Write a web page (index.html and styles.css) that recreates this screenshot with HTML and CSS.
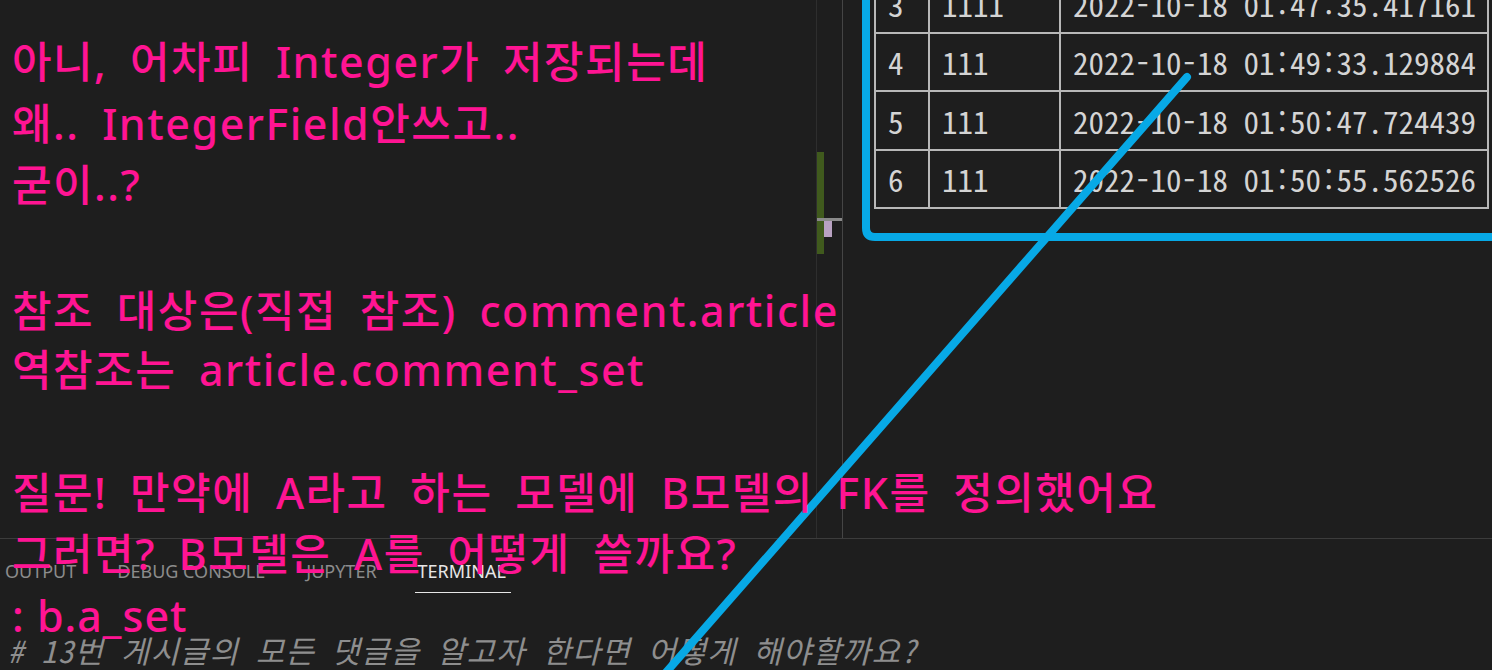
FILE: index.html
```html
<!DOCTYPE html>
<html lang="ko">
<head>
<meta charset="utf-8">
<title>Django 역참조</title>
<link rel="stylesheet" href="styles.css">
</head>
<body>
<div class="workbench">
  <div class="editors">
    <div class="editor-left"></div>
    <div class="ruler">
      <div class="ruler-green"></div>
      <div class="ruler-tick"></div>
      <div class="ruler-mark"></div>
    </div>
    <div class="editor-right">
      <div class="table-scroll">
        <table class="sqltable">
          <tr><td class="c1">3</td><td class="c2">1111</td><td class="c3">2022-10-18 01:47:35.417161</td></tr>
          <tr><td class="c1">4</td><td class="c2">111</td><td class="c3">2022-10-18 01:49:33.129884</td></tr>
          <tr><td class="c1">5</td><td class="c2">111</td><td class="c3">2022-10-18 01:50:47.724439</td></tr>
          <tr><td class="c1">6</td><td class="c2">111</td><td class="c3">2022-10-18 01:50:55.562526</td></tr>
        </table>
      </div>
    </div>
  </div>
  <div class="panel">
    <div class="panel-tabs">
      <div class="tab">OUTPUT</div>
      <div class="tab">DEBUG CONSOLE</div>
      <div class="tab">JUPYTER</div>
      <div class="tab active">TERMINAL</div>
    </div>
    <div class="terminal">
      <div class="term-line"># 13번 게시글의 모든 댓글을 알고자 한다면 어떻게 해야할까요?</div>
    </div>
  </div>
</div>

<svg class="annotation" width="1492" height="670" viewBox="0 0 1492 670" xmlns="http://www.w3.org/2000/svg">
  <path d="M866 -10 V228 Q866 237 875 237 H1500" fill="none" stroke="#07a9e6" stroke-width="8" stroke-linejoin="round"/>
  <path d="M1187 77 L662 677" fill="none" stroke="#07a9e6" stroke-width="8" stroke-linecap="round"/>
</svg>

<div class="notes">
  <div class="note">아니, 어차피 Integer가 저장되는데</div>
  <div class="note">왜.. IntegerField안쓰고..</div>
  <div class="note">굳이..?</div>
  <div class="note blank"></div>
  <div class="note shifted">참조 대상은(직접 참조) comment.article</div>
  <div class="note">역참조는 article.comment_set</div>
  <div class="note blank"></div>
  <div class="note">질문! 만약에 A라고 하는 모델에 B모델의 FK를 정의했어요</div>
  <div class="note">그러면? B모델은 A를 어떻게 쓸까요?</div>
  <div class="note tight">: b.a_set</div>
</div>
</body>
</html>
```

FILE: styles.css
```css
html, body {
  margin: 0;
  padding: 0;
  background: #1e1e1e;
}
body {
  width: 1492px;
  height: 670px;
  overflow: hidden;
  position: relative;
  font-family: "Noto Sans", "Noto Sans CJK KR", sans-serif;
}
.workbench {
  display: flex;
  flex-direction: column;
  height: 670px;
}
.editors {
  display: flex;
  height: 538px;
  flex: none;
}
.editor-left {
  width: 816px;
  flex: none;
}
.ruler {
  width: 25px;
  flex: none;
  position: relative;
  border-left: 1px solid #2e2e2e;
  border-right: 1px solid #454545;
}
.ruler-green {
  position: absolute;
  left: 0;
  top: 152px;
  width: 7px;
  height: 102px;
  background: #405a1d;
}
.ruler-tick {
  position: absolute;
  left: 0;
  top: 218px;
  width: 25px;
  height: 3px;
  background: #8a8a8a;
}
.ruler-mark {
  position: absolute;
  left: 7px;
  top: 221px;
  width: 8px;
  height: 16px;
  background: #b9a2c2;
}
.editor-right {
  flex: 1;
  overflow: hidden;
  padding-left: 31px;
}
.table-scroll {
  margin-top: -27px;
}
.sqltable {
  border-collapse: collapse;
  font-family: "Noto Sans Mono CJK KR", "DejaVu Sans Mono", monospace;
  font-size: 31px;
  color: #d4d4d4;
}
.sqltable td {
  border: 2px solid #b8b8b8;
  height: 56.5px;
  padding: 0 0 0 12px;
  vertical-align: middle;
  white-space: nowrap;
}
.sqltable .c1 { width: 40px; }
.sqltable .c2 { width: 117px; }
.sqltable .c3 { width: 414px; }

.panel {
  flex: 1;
  border-top: 1px solid #3c3c3c;
}
.panel-tabs {
  display: flex;
  gap: 35px;
  padding-left: 2px;
}
.tab {
  font-family: "Noto Sans", sans-serif;
  font-size: 18px;
  line-height: 22px;
  color: #8c8c8c;
  padding: 21px 3px 10px 3px;
  border-bottom: 1px solid transparent;
}
.tab.active {
  color: #e7e7e7;
  border-bottom-color: #e7e7e7;
  padding: 21px 5px 10px 3px;
}
.terminal {
  padding: 39px 0 0 8px;
}
.term-line {
  font-family: "Noto Sans Mono CJK KR", "DejaVu Sans Mono", "Noto Sans CJK KR", monospace;
  font-style: italic;
  font-size: 30.8px;
  letter-spacing: 1.25px;
  line-height: 36px;
  color: #8e8e8e;
  white-space: pre;
}

.annotation {
  position: absolute;
  left: 0;
  top: 0;
}
.notes {
  position: absolute;
  left: 12px;
  top: 31px;
  color: #ff1493;
  font-family: "Noto Sans", "Noto Sans CJK KR", sans-serif;
  font-size: 43px;
  font-weight: 500;
  letter-spacing: 1.5px;
  word-spacing: 10px;
}
.note {
  height: 61.5px;
  line-height: 61.5px;
  white-space: nowrap;
}
.note.shifted { margin-top: 3px; margin-bottom: -3px; }
.note.tight { word-spacing: 0; letter-spacing: 1px; }
```
